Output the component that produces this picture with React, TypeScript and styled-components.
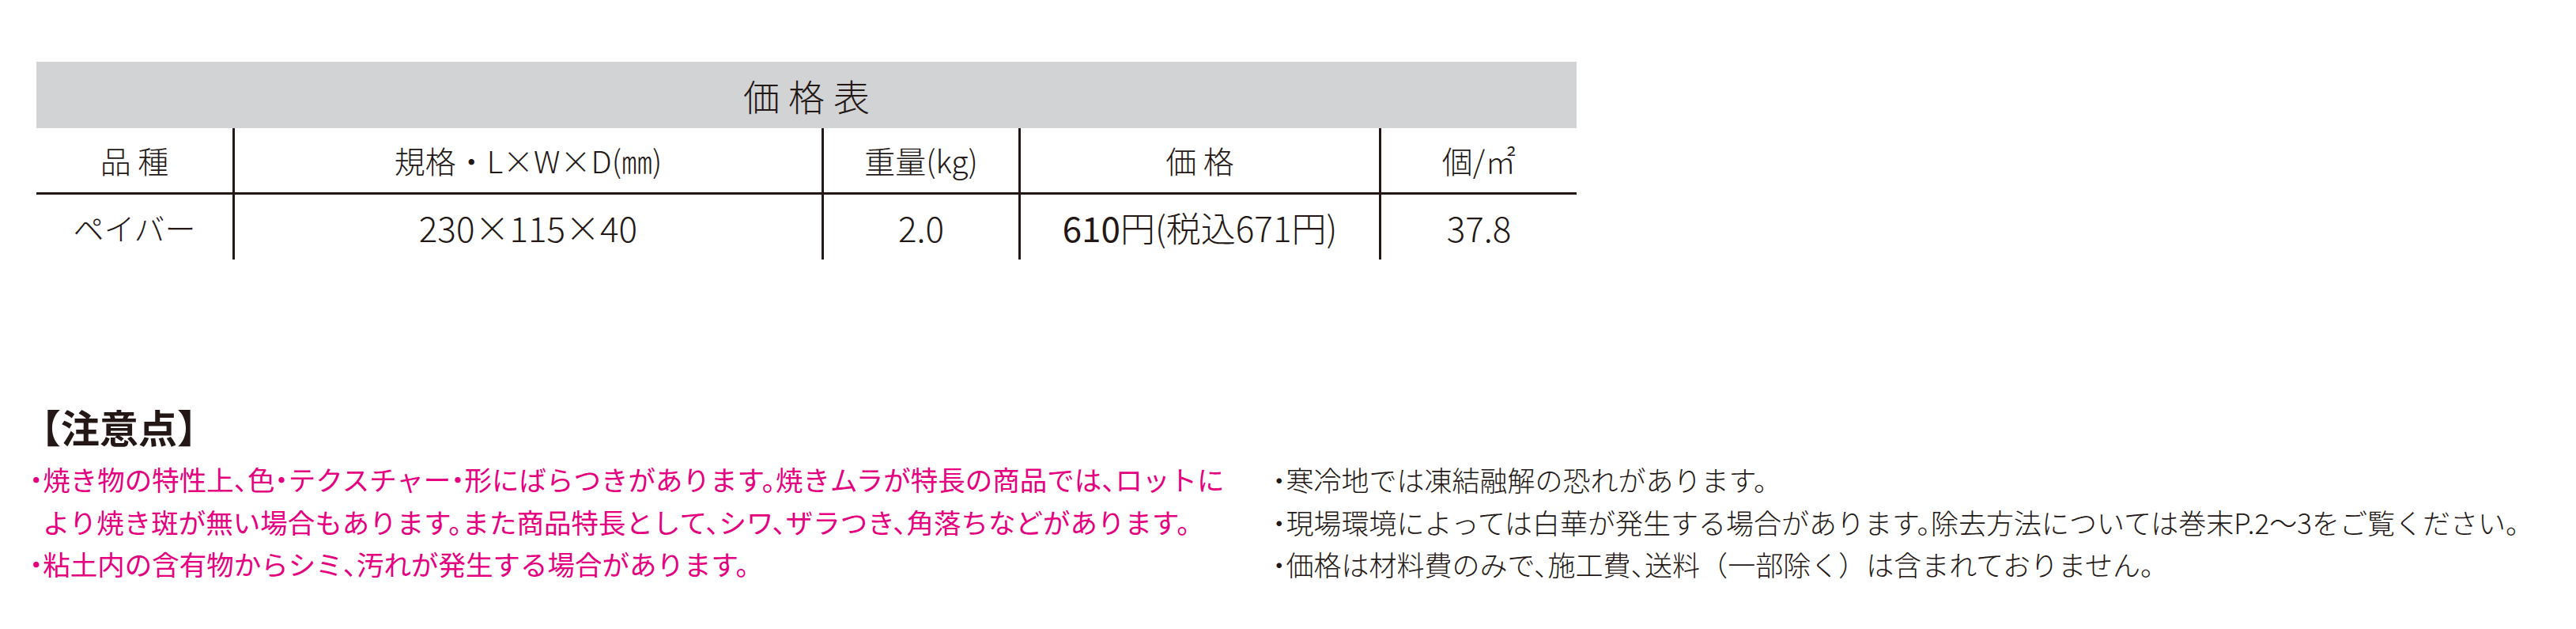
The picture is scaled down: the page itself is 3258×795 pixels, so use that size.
import React from "react";
import styled, { createGlobalStyle } from "styled-components";

const GlobalStyle = createGlobalStyle`
  html, body {
    margin: 0;
    padding: 0;
    background: #ffffff;
  }
  body {
    font-family: "Noto Sans CJK JP", "Noto Sans", sans-serif;
    color: #231815;
  }
`;

const Page = styled.div`
  width: 3258px;
  height: 795px;
  box-sizing: border-box;
  padding-top: 78px;
  overflow: hidden;
`;

const PriceTable = styled.section`
  width: 1948px;
  margin-left: 46px;
`;

const TitleBar = styled.div`
  height: 84px;
  background: #d2d3d5;
  display: flex;
  align-items: center;
  justify-content: center;
  font-size: 46px;
  font-weight: 300;
  letter-spacing: 11px;
  padding-left: 11px;
  box-sizing: border-box;
  line-height: 1;
`;

const Grid = styled.div`
  display: grid;
  grid-template-columns: 251px 745px 249px 456px 247px;
`;

const Cell = styled.div<{ $head?: boolean; $last?: boolean; $size?: number }>`
  box-sizing: border-box;
  height: ${(p) => (p.$head ? 84 : 82)}px;
  display: flex;
  align-items: center;
  justify-content: center;
  border-right: ${(p) => (p.$last ? "none" : "3px solid #231815")};
  border-bottom: ${(p) => (p.$head ? "3px solid #231815" : "none")};
  font-size: ${(p) => p.$size ?? 39}px;
  font-weight: 300;
  line-height: 1;
  white-space: nowrap;
`;

const Strong = styled.span`
  font-weight: 400;
`;

const Notes = styled.section`
  margin-top: 181px;
  padding-left: 37px;
`;

const NotesTitle = styled.h2`
  margin: 0 0 0 -9px;
  font-size: 49px;
  font-weight: 700;
  line-height: 60px;
  height: 70px;
  color: #231815;
`;

const Columns = styled.div`
  display: grid;
  grid-template-columns: 1572px auto;
`;

const NoteList = styled.div<{ $pink?: boolean }>`
  color: ${(p) => (p.$pink ? "#e4007f" : "#231815")};
  font-weight: ${(p) => (p.$pink ? 400 : 300)};
  font-size: ${(p) => (p.$pink ? 34.5 : 35)}px;
  line-height: 53.5px;
  font-feature-settings: "halt";
  white-space: nowrap;
`;

const NoteLine = styled.div<{ $indent?: boolean }>`
  padding-left: ${(p) => (p.$indent ? "17px" : "0")};
`;

const FullWidth = styled.span`
  font-feature-settings: normal;
`;

export default function App() {
  return (
    <>
      <GlobalStyle />
      <Page>
        <PriceTable>
          <TitleBar>価格表</TitleBar>
          <Grid>
            <Cell $head>品&nbsp;種</Cell>
            <Cell $head>規格・L×W×D(㎜)</Cell>
            <Cell $head>重量(kg)</Cell>
            <Cell $head>価&nbsp;格</Cell>
            <Cell $head $last>個/㎡</Cell>

            <Cell>ペイバー</Cell>
            <Cell $size={44}>230×115×40</Cell>
            <Cell $size={44}>2.0</Cell>
            <Cell $size={44}>
              <Strong>610</Strong>円(税込671円)
            </Cell>
            <Cell $size={44} $last>
              37.8
            </Cell>
          </Grid>
        </PriceTable>

        <Notes>
          <NotesTitle>【注意点】</NotesTitle>
          <Columns>
            <NoteList $pink>
              <NoteLine>
                ・焼き物の特性上、色・テクスチャー・形にばらつきがあります。焼きムラが特長の商品では、ロットに
              </NoteLine>
              <NoteLine $indent>
                より焼き斑が無い場合もあります。また商品特長として、シワ、ザラつき、角落ちなどがあります。
              </NoteLine>
              <NoteLine>・粘土内の含有物からシミ、汚れが発生する場合があります。</NoteLine>
            </NoteList>
            <NoteList>
              <NoteLine>・寒冷地では凍結融解の恐れがあります。</NoteLine>
              <NoteLine>
                ・現場環境によっては白華が発生する場合があります。除去方法については巻末P.2〜3をご覧ください。
              </NoteLine>
              <NoteLine>
                {"・価格は材料費のみで、施工費、送料"}
                <FullWidth>（</FullWidth>
                {"一部除く"}
                <FullWidth>）</FullWidth>
                {"は含まれておりません。"}
              </NoteLine>
            </NoteList>
          </Columns>
        </Notes>
      </Page>
    </>
  );
}
